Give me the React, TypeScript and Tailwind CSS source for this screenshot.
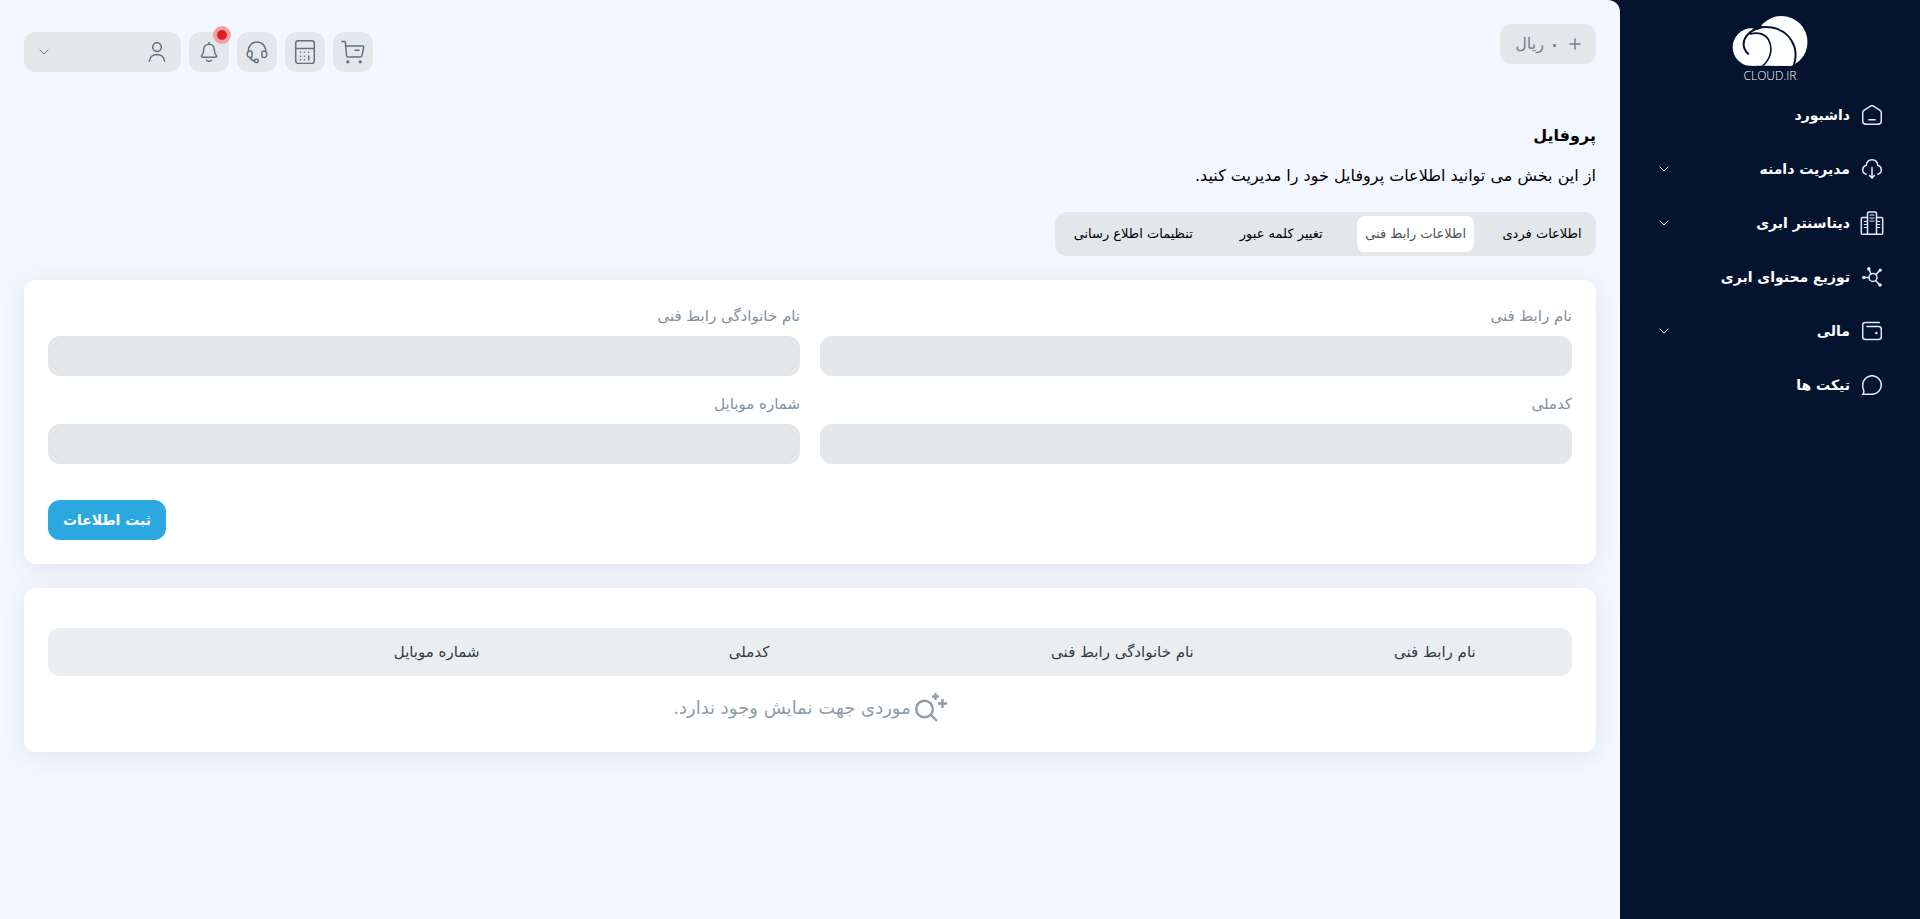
import { useState } from 'react';
import type { ReactNode } from 'react';
import clsx from 'clsx';

type MenuItem = {
  title: string;
  icon: ReactNode;
  expandable?: boolean;
};

const line = {
  fill: 'none',
  stroke: 'currentColor',
  strokeLinecap: 'round' as const,
  strokeLinejoin: 'round' as const,
  strokeWidth: 1.5,
};

const ChevronIcon = () => (
  <svg viewBox="0 0 10 6" className="h-1.5 w-2.5" {...line} strokeWidth="1">
    <path d="M1 1l4 4 4-4" />
  </svg>
);

const HomeIcon = () => (
  <svg viewBox="0 0 20 20" className="size-5" {...line}>
    <path d="M8.6 1.1 2.2 5.2C1.1 6 .7 6.7.7 8v7.6c0 2.400 1.300 3.700 3.700 3.700h11.200c2.400 0 3.700-1.300 3.700-3.700V8c0-1.300-.4-2-1.500-2.800l-6.400-4.100c-.9-.6-1.900-.6-2.800 0Z" />
    <path d="M6.800 14.800h6.400" />
  </svg>
);

const CloudDownIcon = () => (
  <svg viewBox="0 0 20 20" className="size-5" {...line}>
    <path d="M4.200 15.200C2.100 14.700.7 13 .7 10.900c0-2.300 1.500-4 3.500-4.500C4.700 3.100 7 .8 10 .8s5.400 2.300 5.800 5.600c2 .5 3.500 2.200 3.500 4.500 0 2.100-1.400 3.800-3.500 4.300" />
    <path d="M10 8.500v10.300M7.600 16.600l2.400 2.500 2.400-2.500" />
  </svg>
);

const BuildingsIcon = () => (
  <svg viewBox="0 0 24 24" className="size-6" {...line}>
    <path d="M7.500 23.200V2.300C7.500 1.500 8 1 8.800 1h6.400c.8 0 1.300.5 1.300 1.300v20.900" />
    <path d="M7.500 6.500H2.600c-.8 0-1.300.5-1.300 1.300v14.100c0 .8.500 1.300 1.300 1.300h18.800c.8 0 1.300-.5 1.300-1.300V7.800c0-.8-.5-1.300-1.300-1.300h-4.900" />
    <path d="M10 4h4M10 7h4M10 10h4M4.300 10.500h3M4.300 13.500h3M4.300 16.500h3M16.700 10.500h3M16.700 13.500h3M16.700 16.500h3" strokeWidth="1.200" />
  </svg>
);

const NodesIcon = () => (
  <svg viewBox="0 0 20 20" className="size-5" {...line}>
    <circle cx="11" cy="10.500" r="4" />
    <path d="M8.900 7 7.200 2.800M13.800 7.600l4.200-4.200M7 10.500H2M13.600 13.600l4 4.200" />
    <g fill="currentColor" stroke="none">
      <circle cx="6.800" cy="1.900" r="1.800" />
      <circle cx="18.200" cy="3.100" r="1.700" />
      <circle cx="1.800" cy="10.500" r="1.800" />
      <circle cx="18" cy="18" r="1.800" />
    </g>
  </svg>
);

const WalletIcon = () => (
  <svg viewBox="0 0 20 20" className="size-5" {...line}>
    <path d="M17.300 1.500H3.200C1.600 1.500.7 2.400.7 4v11.800c0 1.700.9 2.600 2.600 2.600h13.400c1.700 0 2.600-.9 2.600-2.600V8.100c0-1.700-.9-2.600-2.600-2.600H5" />
    <circle cx="14.400" cy="12" r=".5" fill="currentColor" />
  </svg>
);

const ChatIcon = () => (
  <svg viewBox="0 0 20 20" className="size-5" {...line}>
    <path d="M.7 10A9.300 9.300 0 1 1 10 19.300H.8c1-1.300 1.300-2.600.9-4.100A9.300 9.300 0 0 1 .7 10Z" />
  </svg>
);

const CartIcon = () => (
  <svg viewBox="0 0 24 24" className="size-6" {...line}>
    <path d="M1 1.500h2.500c.5 0 .9.400.9.900l1.100 13.100c.1 1.100.6 1.600 1.700 1.600h11.900c1.100 0 1.700-.5 1.900-1.500l1.600-7.700c.3-1.300-.2-1.900-1.400-1.900H4.900" />
    <path d="M14 10.200h4" />
    <circle cx="6.800" cy="21.800" r=".9" fill="currentColor" />
    <circle cx="19.200" cy="21.800" r=".9" fill="currentColor" />
  </svg>
);

const CalculatorIcon = () => (
  <svg viewBox="0 0 24 24" className="size-6" {...line}>
    <rect x="2.700" y=".8" width="18.600" height="22.600" rx="2.600" />
    <path d="M2.700 8.500h18.600" />
    <path d="M7.500 12.300h.1M11.500 12.300h.1M15.700 12.300h.1M7.500 16.200h.1M11.500 16.200h.1M7.500 19.700h.1M11.500 19.700h.1M15.700 16v3.700" />
  </svg>
);

const HeadsetIcon = () => (
  <svg viewBox="0 0 24 24" className="size-6" {...line}>
    <path d="M3.200 11C3.500 5.400 7.200 2 12 2s8.500 3.400 8.800 9" />
    <path d="M5.600 11.100c1 0 1.500.5 1.500 1.500v3.400c0 1-.5 1.500-1.500 1.500-2.100.2-3.400-1-3.400-3.200s1.300-3.400 3.400-3.200ZM18.400 11.100c-1 0-1.500.5-1.500 1.500v3.400c0 1 .5 1.500 1.500 1.500 2.100.2 3.400-1 3.400-3.200s-1.300-3.400-3.400-3.200Z" />
    <path d="M5 17.500c.8 2.100 2.300 3.200 4.400 3.400" />
    <ellipse cx="11.400" cy="20.900" rx="2" ry="1.700" />
  </svg>
);

const BellIcon = () => (
  <svg viewBox="0 0 20 20" className="size-5" {...line}>
    <path d="M10 .7v1.600M10 2.300c-3.200 0-5.300 2.300-5.300 5.300 0 3.300-.8 4.700-2 6-.5.600-.3 1.600.6 1.600h13.400c.9 0 1.100-1 .6-1.600-1.200-1.300-2-2.700-2-6 0-3-2.100-5.300-5.300-5.300Z" />
    <path d="M7.500 18.200c1.400 1.300 3.600 1.300 5 0" />
  </svg>
);

const UserIcon = () => (
  <svg viewBox="0 0 20 20" className="size-5" {...line}>
    <circle cx="10" cy="5.100" r="4.300" />
    <path d="M2.400 19.200c.4-4 3.500-6.800 7.600-6.800s7.200 2.800 7.600 6.800" />
  </svg>
);

const EmptySearchIcon = () => (
  <svg viewBox="0 0 32 30" className="h-[30px] w-8" {...line} strokeLinecap="butt" strokeWidth="2.400">
    <circle cx="9.500" cy="17" r="8.300" />
    <path d="m15.500 22.500 6.500 6.500" />
    <path d="M20.500 1v7M17 4.500h7M27.500 7v9M23 11.500h9" />
  </svg>
);

const Logo = () => (
  <a href="/" aria-label="CLOUD.IR" className="flex flex-col items-center">
    <svg viewBox="96 47 228 152" className="h-[50px] w-[76px]">
      <clipPath id="cloud-base">
        <path d="M90 40h240v158.500H90z" />
      </clipPath>
      <g clipPath="url(#cloud-base)">
        <g fill="#fff">
          <circle cx="245" cy="126" r="79" />
          <circle cx="154" cy="142" r="57.500" />
          <path d="M154 140h122v60H154z" />
        </g>
        <g fill="none" stroke="#04142f" strokeWidth="6" strokeLinecap="round">
          <path d="M144 162c-17-14-19-38-4-56 17-20 46-30 76-24 34 6 58 29 68 58 6 20 5 40-3 62" />
          <path d="M150 102c24-8 46 0 56 18 14 27 6 60-22 82" strokeWidth="5" />
          <path d="M160 88l24-8" />
        </g>
      </g>
    </svg>
    <span dir="ltr" className="font-['Open_Sans','Lato',sans-serif] text-[12px] leading-5 font-light text-white">CLOUD.IR</span>
  </a>
);

const menuItems: MenuItem[] = [
  { title: 'داشبورد', icon: <HomeIcon /> },
  { title: 'مدیریت دامنه', icon: <CloudDownIcon />, expandable: true },
  { title: 'دیتاسنتر ابری', icon: <BuildingsIcon />, expandable: true },
  { title: 'توزیع محتوای ابری', icon: <NodesIcon /> },
  { title: 'مالی', icon: <WalletIcon />, expandable: true },
  { title: 'تیکت ها', icon: <ChatIcon /> },
];

const tabs = [
  { title: 'اطلاعات فردی', width: 'min-w-24' },
  { title: 'اطلاعات رابط فنی', width: 'min-w-28' },
  { title: 'تغییر کلمه عبور', width: 'min-w-28' },
  { title: 'تنظیمات اطلاع رسانی', width: 'min-w-36' },
];

const fields = [
  { id: 'first-name', label: 'نام رابط فنی' },
  { id: 'last-name', label: 'نام خانوادگی رابط فنی' },
  { id: 'national-code', label: 'کدملی' },
  { id: 'mobile', label: 'شماره موبایل' },
];

const columns = [
  { title: 'نام رابط فنی', width: 'w-[18%]' },
  { title: 'نام خانوادگی رابط فنی', width: 'w-[23%]' },
  { title: 'کدملی', width: 'w-[26%]' },
  { title: 'شماره موبایل', width: 'w-[15%]' },
];

const Sidebar = () => (
  <aside className="w-[300px] shrink-0 pt-4 text-white">
    <Logo />
    <nav className="flex flex-col pt-0.5">
      {menuItems.map((item) => {
        const content = (
          <>
            <span className="flex w-6 justify-center text-[#dfeaf7]">{item.icon}</span>
            <span className="ms-2.5 text-[14px] font-bold">{item.title}</span>
            {item.expandable && <span className="ms-auto"><ChevronIcon /></span>}
          </>
        );
        const style = 'flex h-[54px] w-full items-center ps-9 pe-[39px]';
        return item.expandable ? (
          <button key={item.title} type="button" className={style}>{content}</button>
        ) : (
          <a key={item.title} href="#" className={style}>{content}</a>
        );
      })}
    </nav>
  </aside>
);

const IconButton = ({ label, children }: { label: string; children: ReactNode }) => (
  <button
    type="button"
    aria-label={label}
    className="relative flex size-10 items-center justify-center rounded-xl bg-[#e3e7ea]"
  >
    {children}
  </button>
);

const Header = () => (
  <header className="flex items-start justify-between text-[#5f7380]">
    <button type="button" className="flex h-10 min-w-24 items-center justify-center gap-2 rounded-xl bg-[#e3e7ea] px-3 text-[16px] text-[#72818c]">
      <svg viewBox="0 0 12 12" className="size-3" {...line}>
        <path d="M6 1v10M1 6h10" />
      </svg>
      <span className="flex items-center gap-1">
        <span className="text-[24px] leading-6">۰</span>
        <span>ریال</span>
      </span>
    </button>

    <div className="mt-2 flex gap-2">
      <IconButton label="سبد خرید"><CartIcon /></IconButton>
      <IconButton label="محاسبه قیمت"><CalculatorIcon /></IconButton>
      <IconButton label="پشتیبانی"><HeadsetIcon /></IconButton>
      <IconButton label="اعلان ها">
        <BellIcon />
        <span className="absolute -top-1.5 -right-0.5 size-[18px] rounded-full border-4 border-[#f2a0a4] bg-[#e01f22]" />
      </IconButton>
      <button type="button" aria-label="حساب کاربری" className="flex h-10 w-[157px] items-center justify-between rounded-xl bg-[#e3e7ea] ps-3.5 pe-[15px]">
        <UserIcon />
        <ChevronIcon />
      </button>
    </div>
  </header>
);

const App = () => {
  const [activeTab, setActiveTab] = useState(tabs[1].title);

  return (
    <div dir="rtl" className="flex min-h-screen bg-[#04142f] font-['DejaVu_Sans',sans-serif]">
      <Sidebar />

      <main className="min-w-0 flex-1 rounded-tr-xl bg-[#f3f7ff] p-6">
        <Header />

        <h1 className="mt-12 text-[16px] leading-8 font-bold text-black">پروفایل</h1>
        <p className="mt-3 text-[16px] leading-6 text-black">
          از این بخش می توانید اطلاعات پروفایل خود را مدیریت کنید.
        </p>

        <div role="tablist" className="mt-6 flex h-11 w-fit items-center gap-5 rounded-xl bg-[#e3e7ea] px-1.5">
          {tabs.map((tab) => (
            <button
              key={tab.title}
              type="button"
              role="tab"
              aria-selected={tab.title === activeTab}
              onClick={() => setActiveTab(tab.title)}
              className={clsx(
                'h-9 rounded-lg px-2 text-[13px]',
                tab.width,
                tab.title === activeTab ? 'bg-white text-[#4b545c]' : 'text-black',
              )}
            >
              {tab.title}
            </button>
          ))}
        </div>

        <form
          onSubmit={(e) => e.preventDefault()}
          className="mt-6 rounded-xl bg-white p-6 shadow-[0_4px_24px_rgba(60,60,90,0.1)]"
        >
          <div className="grid grid-cols-2 gap-x-5 gap-y-4">
            {fields.map((field) => (
              <div key={field.id}>
                <label htmlFor={field.id} className="block pb-2 text-[15px] leading-6 text-[#84919d]">{field.label}</label>
                <input id={field.id} type="text" className="block h-10 w-full rounded-xl bg-[#e3e7ea] px-3 text-[15px] outline-none" />
              </div>
            ))}
          </div>
          <div className="mt-9 flex justify-end">
            <button type="submit" className="h-10 min-w-[118px] rounded-xl bg-[#2ba8e0] px-3 text-[14px] font-bold text-white">
              ثبت اطلاعات
            </button>
          </div>
        </form>

        <section className="mt-6 rounded-xl bg-white px-6 pt-10 pb-6 shadow-[0_4px_24px_rgba(60,60,90,0.1)]">
          <table className="w-full table-fixed text-[15px]">
            <thead>
              <tr className="h-12 text-[#333b42]">
                {columns.map((column) => (
                  <th key={column.title} scope="col" className={clsx('bg-[#ebeef1] font-normal first:rounded-r-xl', column.width)}>
                    {column.title}
                  </th>
                ))}
                <td className="rounded-l-xl bg-[#ebeef1]" />
              </tr>
            </thead>
            <tbody>
              <tr>
                <td colSpan={5} className="pt-4 text-[#929ca5]">
                  <div className="flex items-center justify-center gap-1 pb-1.5">
                    <EmptySearchIcon />
                    <span className="text-[18px]">موردی جهت نمایش وجود ندارد.</span>
                  </div>
                </td>
              </tr>
            </tbody>
          </table>
        </section>
      </main>
    </div>
  );
};

export default App;
